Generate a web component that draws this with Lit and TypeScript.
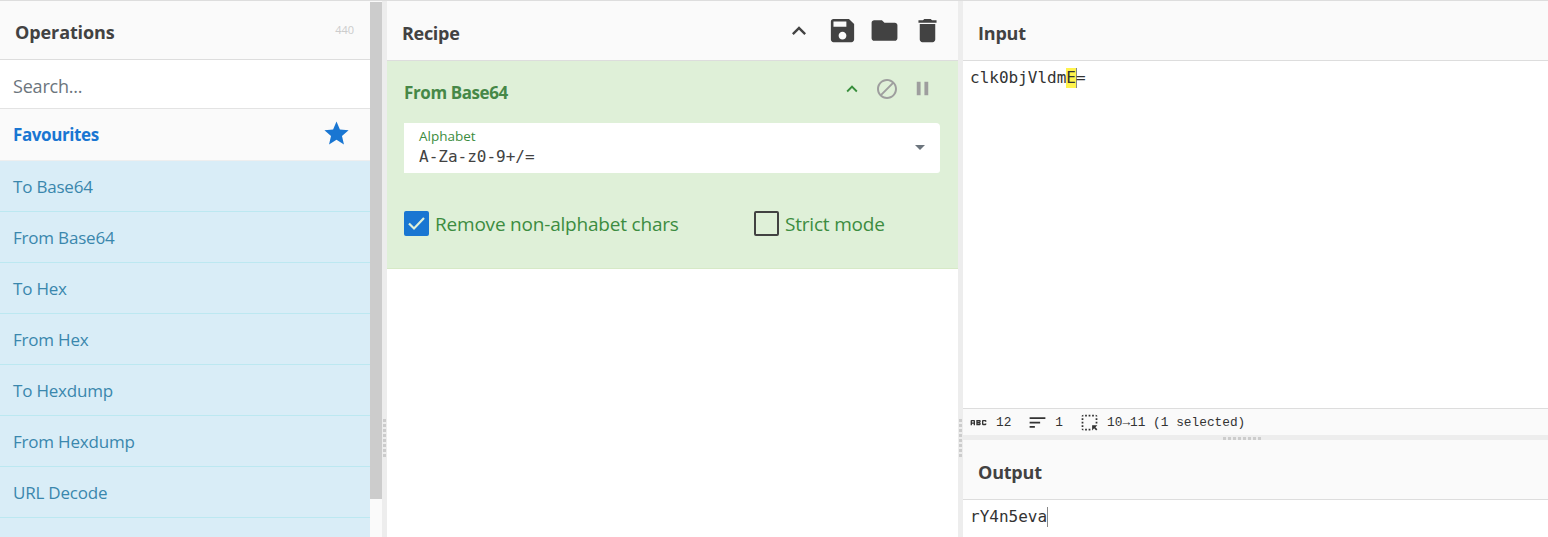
import { LitElement, html, css, svg } from "lit";
import { customElement } from "lit/decorators.js";

const OPERATIONS = [
  "To Base64",
  "From Base64",
  "To Hex",
  "From Hex",
  "To Hexdump",
  "From Hexdump",
  "URL Decode",
  "Regular expression",
];

const ICONS = {
  star: svg`<path d="M12 17.27L18.18 21l-1.64-7.03L22 9.24l-7.19-.61L12 2 9.19 8.63 2 9.24l5.46 4.73L5.82 21z"/>`,
  up: svg`<path d="M7.41 15.41L12 10.83l4.59 4.58L18 14l-6-6-6 6z"/>`,
  save: svg`<path d="M17 3H5c-1.11 0-2 .9-2 2v14c0 1.1.89 2 2 2h14c1.1 0 2-.9 2-2V7l-4-4zm-5 16c-1.66 0-3-1.34-3-3s1.34-3 3-3 3 1.34 3 3-1.34 3-3 3zm3-10H5V5h10v4z"/>`,
  folder: svg`<path d="M10 4H4c-1.1 0-1.99.9-1.99 2L2 18c0 1.1.9 2 2 2h16c1.1 0 2-.9 2-2V8c0-1.1-.9-2-2-2h-8l-2-2z"/>`,
  bin: svg`<path d="M6 19c0 1.1.9 2 2 2h8c1.1 0 2-.9 2-2V7H6v12zM19 4h-3.500l-1-1h-5l-1 1H5v2h14V4z"/>`,
  block: svg`<path d="M12 2C6.480 2 2 6.480 2 12s4.480 10 10 10 10-4.480 10-10S17.520 2 12 2zM4 12c0-4.420 3.580-8 8-8 1.850 0 3.550.630 4.900 1.690L5.690 16.900C4.630 15.550 4 13.850 4 12zm8 8c-1.850 0-3.550-.630-4.900-1.690L18.310 7.100C19.370 8.450 20 10.150 20 12c0 4.420-3.580 8-8 8z"/>`,
  pause: svg`<path d="M6 19h4V5H6v14zm8-14v14h4V5h-4z"/>`,
  abc: svg`<path fill-rule="evenodd" d="M21 11h-1.500v-.5h-2v3h2V13H21v1c0 .550-.450 1-1 1h-3c-.550 0-1-.450-1-1v-4c0-.550.450-1 1-1h3c.550 0 1 .450 1 1v1zM8 10v5H6.500v-1.500h-2V15H3v-5c0-.550.450-1 1-1h3c.550 0 1 .450 1 1zm-1.500.5h-2V12h2v-1.500zm7 1.500c.550 0 1 .450 1 1v1c0 .550-.450 1-1 1h-4V9h4c.550 0 1 .450 1 1v1c0 .550-.450 1-1 1zM11 10.500v.750h2v-.750h-2zm2 2.250h-2v.750h2v-.750z"/>`,
  lines: svg`<path d="M3 18h6v-2H3v2zM3 6v2h18V6H3zm0 7h12v-2H3v2z"/>`,
  select: svg`<path d="M17 5h-2V3h2v2zm-2 10v6l2.290-2.290L19.590 21 21 19.590l-2.290-2.290L21 15h-6zm4-6h2V7h-2v2zm0 4h2v-2h-2v2zm-8 8h2v-2h-2v2zM7 5h2V3H7v2zM3 17h2v-2H3v2zm2 4v-2H3c0 1.100.900 2 2 2zM19 3v2h2c0-1.100-.900-2-2-2zm-8 2h2V3h-2v2zM3 9h2V7H3v2zm4 12h2v-2H7v2zm-4-8h2v-2H3v2zm0-8h2V3c-1.100 0-2 .900-2 2z"/>`,
};

const icon = (name: keyof typeof ICONS, cls: string) =>
  html`<svg class="icon ${cls}" viewBox="0 0 24 24" aria-hidden="true">${ICONS[name]}</svg>`;

const shared = css`
  :host {
    display: block;
    box-sizing: border-box;
    min-width: 0;
    font-family: "Open Sans", "Noto Sans", sans-serif;
    color: #424242;
  }
  *, *::before, *::after { box-sizing: border-box; }
  .icon { display: block; fill: currentColor; flex: none; }
  .title {
    display: flex;
    align-items: center;
    background: #fafafa;
    border-bottom: 1px solid #ddd;
    font-size: 18px;
    font-weight: 700;
    line-height: 26px;
    white-space: nowrap;
  }
`;

@customElement("operations-pane")
class OperationsPane extends LitElement {
  static styles = [shared, css`
    :host { display: flex; height: 100%; background: #fafafa; }
    .content { width: 370px; overflow: hidden; }
    .title { height: 59px; padding: 4px 16px 0 15px; justify-content: space-between; letter-spacing: -0.1px; }
    .count { font-size: 11px; font-weight: 400; color: #ccc; letter-spacing: 0; margin-top: -4px; }
    .search {
      height: 49px; padding: 3px 13px 0; display: flex; align-items: center;
      background: #fff; border-bottom: 1px solid #e3e3e3;
      color: #6c757d; font-size: 18px; letter-spacing: -0.2px;
    }
    .category {
      height: 52px; padding: 0 20px 0 13px; display: flex; align-items: center; justify-content: space-between;
      border-bottom: 1px solid #eee; color: #1976d2; font-size: 17px; font-weight: 700; letter-spacing: -0.4px;
    }
    .star { width: 29px; height: 29px; margin: -3px -1px 0 0; }
    .list { margin: 0; padding: 0; list-style: none; }
    .item {
      height: 51px; padding-left: 13px; display: flex; align-items: center;
      background: #d9edf7; border-bottom: 1px solid #bce8f1;
      color: #3a87ad; font-size: 17px; letter-spacing: -0.2px;
    }
    .track { width: 12px; padding-top: 1px; }
    .thumb { height: 497px; background: #ccc; }
  `];
  render() {
    return html`
      <div class="content">
        <div class="title"><span>Operations</span><span class="count">440</span></div>
        <div class="search">Search...</div>
        <div class="category"><span>Favourites</span>${icon("star", "star")}</div>
        <ul class="list">${OPERATIONS.map((name) => html`<li class="item">${name}</li>`)}</ul>
      </div>
      <div class="track"><div class="thumb"></div></div>`;
  }
}

@customElement("recipe-pane")
class RecipePane extends LitElement {
  static styles = [shared, css`
    :host { height: 100%; background: #fff; overflow: hidden; }
    .title { height: 60px; padding: 4px 15px 0; justify-content: space-between; letter-spacing: -0.3px; }
    .controls { display: flex; align-items: center; margin-top: -4px; }
    .up { width: 28px; height: 28px; margin-right: 14px; }
    .save { width: 31px; height: 31px; margin-right: 11px; }
    .folder { width: 31px; height: 31px; margin-right: 12px; }
    .bin { width: 31px; height: 31px; }
    .operation {
      height: 208px; padding: 13px 18px 0 17px;
      background: #dff0d8; border-bottom: 1px solid #d6e9c6; color: #3c8c40;
    }
    .head { height: 36px; display: flex; justify-content: space-between; align-items: center; }
    .name { font-size: 17px; font-weight: 700; letter-spacing: -0.4px; color: #468847; }
    .tools { display: flex; align-items: center; margin: -7px 6px 0 0; color: #9e9e9e; }
    .collapse { width: 22px; height: 22px; margin-right: 12px; color: #388e3c; }
    .block { width: 24px; height: 24px; margin-right: 12px; }
    .pause { width: 23px; height: 23px; }
    .field {
      height: 50px; margin-top: 13px; padding: 4px 15px 0; display: flex; justify-content: space-between;
      background: #fff; border-radius: 0 4px 3px 0;
    }
    .label { font-size: 13.5px; line-height: 18px; }
    .value { font: 16px/23px "DejaVu Sans Mono", monospace; color: #424242; }
    .arrow { width: 10px; height: 5px; margin-top: 18px; fill: #6c757d; }
    .options { display: grid; grid-template-columns: 350px auto; margin-top: 36px; }
    .option { display: flex; align-items: center; gap: 6px; font-size: 19px; line-height: 26px; white-space: nowrap; letter-spacing: -0.2px; }
    .text { padding-top: 2px; }
    .box { width: 25px; height: 25px; border: 2px solid #424242; border-radius: 2px; }
    .checked { background: #1976d2; border-color: #1976d2; }
    .tick { display: block; width: 21px; height: 21px; fill: none; stroke: #dff0d8; stroke-width: 2.200; }
  `];
  render() {
    return html`
      <div class="title">
        <span>Recipe</span>
        <div class="controls">${icon("up", "up")}${icon("save", "save")}${icon("folder", "folder")}${icon("bin", "bin")}</div>
      </div>
      <section class="operation">
        <div class="head">
          <span class="name">From Base64</span>
          <div class="tools">${icon("up", "collapse")}${icon("block", "block")}${icon("pause", "pause")}</div>
        </div>
        <div class="field">
          <div><div class="label">Alphabet</div><div class="value">A-Za-z0-9+/=</div></div>
          <svg class="arrow" viewBox="0 0 10 5"><path d="M0 0h10L5 5z"/></svg>
        </div>
        <div class="options">
          <div class="option">
            <span class="box checked"><svg class="tick" viewBox="0 0 21 21"><path d="M3 10.500l5 5L18 5"/></svg></span>
            <span class="text">Remove non-alphabet chars</span>
          </div>
          <div class="option"><span class="box"></span><span class="text strict">Strict mode</span></div>
        </div>
      </section>`;
  }
}

@customElement("io-pane")
class IoPane extends LitElement {
  static styles = [shared, css`
    :host { display: flex; flex-direction: column; height: 100%; background: #fff; overflow: hidden; }
    .title { flex: none; height: 60px; padding: 4px 15px 0; letter-spacing: -0.2px; }
    .out { padding-top: 5px; }
    .editor { padding: 6px 7px 0; font: 16px/22px "DejaVu Sans Mono", monospace; color: #333; white-space: pre; }
    .input { height: 347px; }
    .line { display: flex; align-items: center; height: 22px; }
    .mark { height: 20px; line-height: 20px; background: #fff34d; }
    .cursor { width: 1px; height: 20px; margin-right: -1px; background: #888; }
    .status {
      flex: none; height: 27px; padding: 1px 7px 0; display: flex; align-items: center;
      background: #fafafa; border-top: 1px solid #ddd;
      font: 12.8px/18px "Liberation Mono", monospace; color: #333; white-space: pre;
    }
    .stat { display: flex; align-items: center; }
    .lines-stat { margin-left: 17px; }
    .selection { margin-left: 17px; }
    .small { width: 21px; height: 21px; }
    .abc { margin: 0 7px 0 -2px; }
    .lines { margin: 0 7px 0 -1px; }
    .select { margin: 0 7px 0 -1px; }
    .divider { flex: none; height: 5px; background: #ededed; display: flex; align-items: flex-end; justify-content: center; }
    .grip { width: 38px; height: 3px; margin-right: 28px; background: repeating-linear-gradient(90deg, #ccc 0 3px, #ededed 3px 5px); }
  `];
  render() {
    return html`
      <div class="title">Input</div>
      <div class="editor input"><div class="line">clk0bjVldm<span class="mark">E</span><span class="cursor"></span>=</div></div>
      <div class="status">
        <span class="stat">${icon("abc", "small abc")}12</span>
        <span class="stat lines-stat">${icon("lines", "small lines")}1</span>
        <span class="stat selection">${icon("select", "small select")}10→11 (1 selected)</span>
      </div>
      <div class="divider"><div class="grip"></div></div>
      <div class="title out">Output</div>
      <div class="editor"><div class="line">rY4n5eva<span class="cursor"></span></div></div>`;
  }
}

@customElement("app-root")
class AppRoot extends LitElement {
  static styles = css`
    :host { display: block; }
    .app {
      box-sizing: border-box; height: 537px; overflow: hidden; border-top: 1px solid #ddd;
      display: grid; grid-template-columns: 382px 5px 571px 5px 1fr; grid-template-rows: 536px;
    }
    .gutter { background: #ededed; display: flex; justify-content: flex-start; padding: 418px 0 0 1px; }
    .grip { width: 3px; height: 38px; background: repeating-linear-gradient(#ccc 0 3px, #ededed 3px 5px); }
  `;
  render() {
    return html`
      <main class="app">
        <operations-pane></operations-pane>
        <div class="gutter"><div class="grip"></div></div>
        <recipe-pane></recipe-pane>
        <div class="gutter"><div class="grip"></div></div>
        <io-pane></io-pane>
      </main>`;
  }
}
